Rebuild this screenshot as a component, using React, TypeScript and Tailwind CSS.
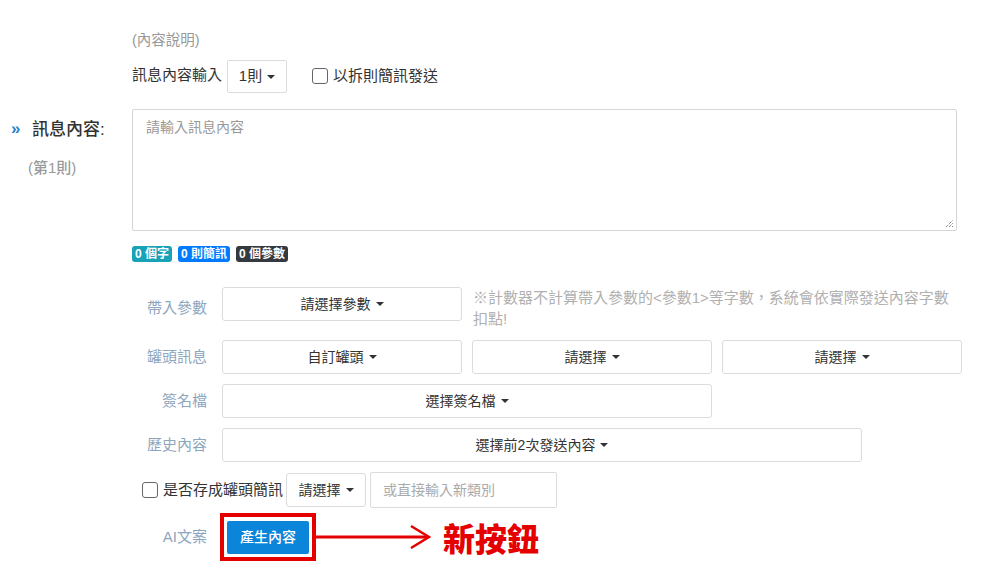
import React from "react";

const Caret = () => (
  <span className="inline-block w-0 h-0 ml-[5px] align-middle border-x-[4px] border-x-transparent border-t-[4px] border-t-[#333]" />
);

const DropBtn = ({ label, w }: { label: string; w: string }) => (
  <div
    className={`${w} h-[34px] shrink-0 flex items-center justify-center border border-[#dcdcdc] rounded-[3px] bg-white text-[14px] text-[#333] leading-[20px]`}
  >
    <span>{label}</span>
    <Caret />
  </div>
);

const Checkbox = () => (
  <span className="inline-block w-[16px] h-[16px] shrink-0 border border-[#666] rounded-[3px] bg-white" />
);

const Label = ({ children, extra = "" }: { children: React.ReactNode; extra?: string }) => (
  <div className={`w-[90px] shrink-0 pr-[15px] text-right text-[15px] leading-[34px] text-[#8ea6bd] ${extra}`}>
    {children}
  </div>
);

export default function App() {
  return (
    <div className="w-[1005px] h-[570px] bg-white overflow-hidden font-['Liberation_Sans','Noto_Sans_CJK_TC',sans-serif] text-[#333]">
      <div className="flex flex-col pt-[30px]">
        {/* description */}
        <div className="pl-[132px] text-[14.5px] leading-[20px] text-[#999]">(內容說明)</div>

        {/* message count row */}
        <div className="pl-[132px] mt-[10px] flex items-center h-[33px]">
          <span className="text-[15px] leading-[20px] text-[#333] pb-[4px]">訊息內容輸入</span>
          <div className="ml-[5px] w-[60px] h-[33px] flex items-center justify-center border border-[#dcdcdc] rounded-[2px] text-[15px]">
            <span>1則</span>
            <Caret />
          </div>
          <div className="ml-[25px] flex items-center gap-[5px] pb-[2px]">
            <Checkbox />
            <span className="text-[15px] leading-[20px]">以拆則簡訊發送</span>
          </div>
        </div>

        {/* textarea row */}
        <div className="mt-[16px] flex">
          <div className="w-[132px] shrink-0 pt-[9px]">
            <div className="flex items-center pl-[11px] h-[24px]">
              <span className="text-[#2a7fc9] text-[17px] font-bold leading-[20px] w-[21px] pb-[2px]">»</span>
              <span className="text-[17px] leading-[24px] text-[#333] font-medium">訊息內容:</span>
            </div>
            <div className="pl-[28px] mt-[16px] text-[15px] leading-[20px] text-[#9a9a9a] font-medium">(第1則)</div>
          </div>
          <div className="flex flex-col">
            <div className="relative w-[825px] h-[122px] border border-[#d6d6d6] rounded-[2px] bg-white">
              <div className="pl-[13px] pt-[7px] text-[14px] leading-[20px] text-[#999]">請輸入訊息內容</div>
              <svg className="absolute right-[2px] bottom-[2px]" width="9" height="9" viewBox="0 0 9 9">
                <path d="M1 8 L8 1 M4 8 L8 4 M7 8 L8 7" stroke="#555" strokeWidth="1" strokeDasharray="1 1" />
              </svg>
            </div>
            <div className="mt-[15px] flex gap-[6px] text-[12px] font-bold text-white leading-[16px]">
              <span className="px-[3px] rounded-[3px] bg-[#17a2b8]">0 個字</span>
              <span className="px-[3px] rounded-[3px] bg-[#007bff]">0 則簡訊</span>
              <span className="px-[3px] rounded-[3px] bg-[#343a40]">0 個參數</span>
            </div>
          </div>
        </div>

        {/* form rows */}
        <div className="pl-[132px] mt-[25px] flex flex-col gap-[10px]">
          <div className="flex items-start mb-[1px]">
            <Label extra="pt-[4px]">帶入參數</Label>
            <DropBtn label="請選擇參數" w="w-[240px]" />
            <div className="ml-[11px] w-[485px] text-[15px] leading-[21px] text-[#b0b0b0]">
              ※計數器不計算帶入參數的&lt;參數1&gt;等字數，系統會依實際發送內容字數扣點!
            </div>
          </div>
          <div className="flex items-start">
            <Label>罐頭訊息</Label>
            <div className="flex gap-[10px]">
              <DropBtn label="自訂罐頭" w="w-[240px]" />
              <DropBtn label="請選擇" w="w-[240px]" />
              <DropBtn label="請選擇" w="w-[240px]" />
            </div>
          </div>
          <div className="flex items-start">
            <Label>簽名檔</Label>
            <DropBtn label="選擇簽名檔" w="w-[490px]" />
          </div>
          <div className="flex items-start">
            <Label>歷史內容</Label>
            <DropBtn label="選擇前2次發送內容" w="w-[640px]" />
          </div>
          <div className="flex items-center pl-[10px] h-[36px]">
            <Checkbox />
            <span className="ml-[5px] text-[15px] leading-[20px]">是否存成罐頭簡訊</span>
            <div className="ml-[3px]">
              <DropBtn label="請選擇" w="w-[80px]" />
            </div>
            <div className="ml-[4px] w-[187px] h-[36px] border border-[#dcdcdc] rounded-[2px] flex items-center pl-[12px] text-[14px] text-[#aaa]">
              或直接輸入新類別
            </div>
          </div>
        </div>

        {/* AI row */}
        <div className="pl-[132px] mt-[5px] flex items-center">
          <div className="w-[88px] shrink-0 pr-[13px] text-right text-[15px] leading-[20px] text-[#8ea6bd]">AI文案</div>
          <div className="w-[96px] h-[48px] border-[4px] border-[#e50000] flex items-center justify-center">
            <div className="w-[82px] h-[33px] rounded-[2px] bg-[#0a85d9] flex items-center justify-center text-white text-[14px] font-medium">
              產生內容
            </div>
          </div>
          <svg width="118" height="28" viewBox="0 0 118 28" className="shrink-0">
            <line x1="0" y1="14" x2="112" y2="14" stroke="#e50000" strokeWidth="3" />
            <polyline points="95,3 113,14 95,25" fill="none" stroke="#e50000" strokeWidth="2.5" />
          </svg>
          <span className="ml-[9px] text-[32px] font-black leading-[40px] text-[#e50000] font-['Noto_Sans_CJK_TC',sans-serif]">
            新按鈕
          </span>
        </div>
      </div>
    </div>
  );
}
